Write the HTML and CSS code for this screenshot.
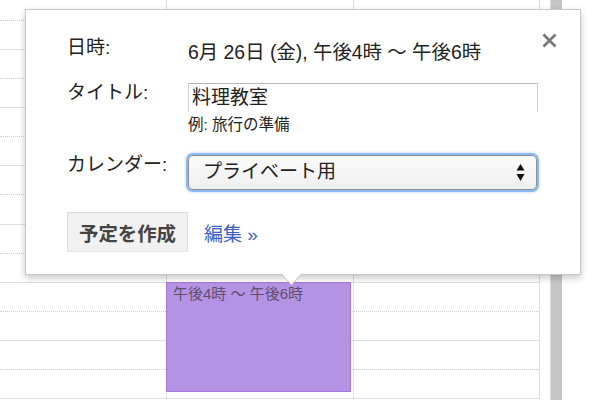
FILE: index.html
```html
<!DOCTYPE html>
<html lang="ja">
<head>
<meta charset="utf-8">
<title>予定を作成</title>
<link rel="stylesheet" href="styles.css">
</head>
<body>
<div class="page">
  <div class="grid">
    <div class="col col-1">
      <div class="hour"><div class="half"></div></div>
      <div class="hour"><div class="half"></div></div>
      <div class="hour"><div class="half"></div></div>
      <div class="hour"><div class="half"></div></div>
      <div class="hour"><div class="half"></div></div>
      <div class="hour"><div class="half"></div></div>
      <div class="hour"><div class="half"></div></div>
      <div class="hour"><div class="half"></div></div>
    </div>
    <div class="col col-2">
      <div class="hour"><div class="half"></div></div>
      <div class="hour"><div class="half"></div></div>
      <div class="hour"><div class="half"></div></div>
      <div class="hour"><div class="half"></div></div>
      <div class="hour"><div class="half"></div></div>
      <div class="hour"><div class="half"></div></div>
      <div class="hour"><div class="half"></div></div>
      <div class="hour"><div class="half"></div></div>
      <div class="event">午後4時 ～ 午後6時</div>
    </div>
    <div class="col col-3">
      <div class="hour"><div class="half"></div></div>
      <div class="hour"><div class="half"></div></div>
      <div class="hour"><div class="half"></div></div>
      <div class="hour"><div class="half"></div></div>
      <div class="hour"><div class="half"></div></div>
      <div class="hour"><div class="half"></div></div>
      <div class="hour"><div class="half"></div></div>
      <div class="hour"><div class="half"></div></div>
    </div>
    <div class="gutter"></div>
    <div class="scrollbar"></div>
  </div>

  <div class="popup">
    <div class="row row-date">
      <div class="label">日時:</div>
      <div class="value date">6月 26日 (金), 午後4時 ～ 午後6時</div>
    </div>
    <div class="row row-title">
      <div class="label">タイトル:</div>
      <div class="value">
        <div class="input">料理教室</div>
        <div class="hint">例: 旅行の準備</div>
      </div>
    </div>
    <div class="row row-cal">
      <div class="label">カレンダー:</div>
      <div class="select">
        <span>プライベート用</span>
        <svg class="arrows" width="9" height="19" viewBox="0 0 9 19"><polygon points="4.5,1 8.5,7.5 0.5,7.5" fill="#111"/><polygon points="0.5,11 8.5,11 4.5,18" fill="#111"/></svg>
      </div>
    </div>
    <div class="row row-actions">
      <div class="btn">予定を作成</div>
      <a class="link">編集 »</a>
    </div>
    <svg class="close" width="15" height="15" viewBox="0 0 15 15"><path d="M1.5 1.5 L13.5 13.5 M13.5 1.5 L1.5 13.5" stroke="#777" stroke-width="2.6" fill="none"/></svg>
    <svg class="tail" width="20" height="12" viewBox="0 0 20 12"><polygon points="0,0 9.5,11 19,0" fill="#fff"/><polyline points="0,0.5 9.5,11 19,0.5" fill="none" stroke="#c6c6c6" stroke-width="1"/></svg>
  </div>
</div>
</body>
</html>
```

FILE: styles.css
```css
* { box-sizing: border-box; }
html, body { margin: 0; padding: 0; }
body {
  width: 600px;
  height: 400px;
  overflow: hidden;
  background: #fff;
  font-family: "Liberation Sans", "Noto Sans CJK JP", sans-serif;
  color: #222;
}
.page { position: relative; width: 600px; height: 400px; overflow: hidden; }

.grid { display: flex; height: 400px; }
.col {
  display: flex;
  flex-direction: column;
  margin-top: -8.2px;
  border-right: 1px solid #dedede;
  position: relative;
}
.col-1 { width: 167px; }
.col-2 { width: 187px; }
.col-3 { width: 186px; }
.hour { flex: 0 0 58.2px; border-bottom: 1px solid #e0e0e0; }
.half { height: 29px; border-bottom: 1px dotted #cfcfcf; }
.gutter { width: 10px; }
.scrollbar { width: 12px; background: #c6c6c6; border-left: 1px solid #dcdcdc; }

.event {
  position: absolute;
  left: -1px;
  top: 290.2px;
  width: 185px;
  height: 110px;
  background: #b593e4;
  border: 1px solid #a676de;
  color: #5e4f6e;
  font-size: 15px;
  line-height: 18px;
  padding: 2px 0 0 6px;
}

.popup {
  position: absolute;
  left: 25px;
  top: 9px;
  width: 556px;
  height: 266px;
  background: #fff;
  border: 1px solid #c8c8c8;
  box-shadow: 0 3px 7px rgba(0, 0, 0, 0.22);
  padding: 28px 0 0 41px;
}
.row { display: flex; align-items: flex-start; }
.label { width: 121px; flex: 0 0 121px; font-size: 19px; line-height: 20px; color: #222; }
.value { font-size: 19.4px; line-height: 20px; }
.date { padding-top: 4px; }

.row-title { margin-top: 21px; }
.input {
  width: 350px;
  height: 29px;
  border: 1px solid #d2d2d2;
  border-top-color: #b8b8b8;
  border-bottom: none;
  padding: 3px 0 0 3px;
  font-size: 19px;
  line-height: 22px;
}
.hint { margin-top: 4px; font-size: 15.5px; line-height: 18px; color: #222; }

.row-cal { margin-top: 21px; }
.select {
  width: 349px;
  height: 35px;
  display: flex;
  align-items: flex-start;
  justify-content: space-between;
  border: 1px solid #8d8d8d;
  border-radius: 5px;
  background: linear-gradient(#fbfbfb, #efefef);
  box-shadow: 0 0 0 2px #8cb9f3, 0 0 3px 2px rgba(110, 165, 240, 0.55);
  padding: 5px 11px 0 14px;
  font-size: 19px;
  line-height: 22px;
}
.arrows { margin-top: 2px; }

.row-actions { margin-top: 22px; align-items: center; }
.btn {
  width: 121px;
  height: 40px;
  background: #f1f1f1;
  border: 1px solid #dcdcdc;
  border-bottom-color: #e6e6e6;
  font-size: 19.4px;
  font-weight: bold;
  color: #444;
  display: flex;
  align-items: center;
  justify-content: center;
}
.link { margin-left: 16px; font-size: 19px; color: #3b5fcc; cursor: pointer; }

.close { position: absolute; left: 516px; top: 23px; }
.tail { position: absolute; left: 256px; top: 100%; }
```
